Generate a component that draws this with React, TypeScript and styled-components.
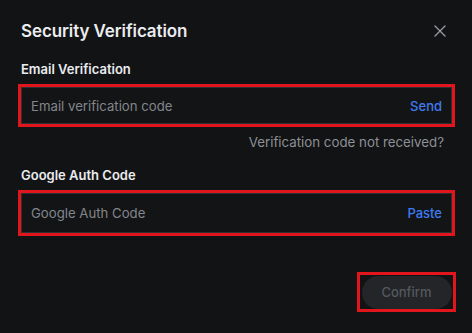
import React from "react";
import styled, { createGlobalStyle } from "styled-components";

const GlobalStyle = createGlobalStyle`
  html, body {
    margin: 0;
    padding: 0;
    background: #121314;
  }
  body {
    font-family: Inter, "Noto Sans", sans-serif;
  }
`;

const Dialog = styled.div`
  width: 472px;
  height: 333px;
  box-sizing: border-box;
  background: #121314;
  padding: 18px 17px 0 18px;
  display: flex;
  flex-direction: column;
`;

const Header = styled.div`
  display: flex;
  align-items: center;
  justify-content: space-between;
  height: 26px;
  padding-left: 3px;
`;

const Title = styled.h2`
  margin: 0;
  color: #eaecef;
  font-size: 17px;
  font-weight: 600;
  letter-spacing: -0.1px;
`;

const CloseButton = styled.button`
  background: none;
  border: none;
  padding: 0;
  margin-right: 7px;
  width: 16px;
  height: 16px;
  display: flex;
  align-items: center;
  justify-content: center;
  cursor: pointer;
`;

const Label = styled.div<{ $top: number }>`
  margin-top: ${(p) => p.$top}px;
  padding-left: 3px;
  color: #eaecef;
  font-size: 13px;
  font-weight: 600;
  line-height: 16px;
`;

const Highlight = styled.div<{ $height: number }>`
  margin-top: 7px;
  border: 3px solid #e0161c;
  height: ${(p) => p.$height}px;
  display: flex;
`;

const InputBox = styled.div`
  flex: 1;
  display: flex;
  align-items: center;
  justify-content: space-between;
  border: 1px solid #2e3034;
  background: #131415;
  padding: 0 9px 0 9px;
`;

const Placeholder = styled.span`
  color: #82868c;
  font-size: 13.2px;
`;

const Action = styled.button`
  background: none;
  border: none;
  padding: 0;
  color: #3e7bf2;
  font-family: inherit;
  font-size: 13px;
  font-weight: 500;
  cursor: pointer;
`;

const HelpLink = styled.div`
  margin-top: 7px;
  text-align: right;
  padding-right: 11px;
  color: #8d9096;
  font-size: 13.3px;
  line-height: 16px;
`;

const Footer = styled.div`
  margin-top: auto;
  margin-bottom: 21px;
  display: flex;
  justify-content: flex-end;
  margin-right: -1px;
`;

const ConfirmFrame = styled.div`
  border: 3px solid #e0161c;
  width: 93px;
  height: 34px;
  display: flex;
  align-items: center;
  justify-content: center;
`;

const ConfirmButton = styled.button`
  width: 90px;
  height: 33px;
  border: none;
  border-radius: 17px;
  background: #242529;
  color: #55585e;
  font-family: inherit;
  font-size: 13px;
  font-weight: 500;
`;

export default function App() {
  return (
    <>
      <GlobalStyle />
      <Dialog>
        <Header>
          <Title>Security Verification</Title>
          <CloseButton aria-label="close">
            <svg width="12" height="12" viewBox="0 0 12 12">
              <path d="M1 1L11 11M11 1L1 11" stroke="#9a9da3" strokeWidth="1.3" strokeLinecap="round" />
            </svg>
          </CloseButton>
        </Header>
        <Label $top={17}>Email Verification</Label>
        <Highlight $height={37}>
          <InputBox>
            <Placeholder>Email verification code</Placeholder>
            <Action>Send</Action>
          </InputBox>
        </Highlight>
        <HelpLink>Verification code not received?</HelpLink>
        <Label $top={17}>Google Auth Code</Label>
        <Highlight $height={40}>
          <InputBox>
            <Placeholder>Google Auth Code</Placeholder>
            <Action>Paste</Action>
          </InputBox>
        </Highlight>
        <Footer>
          <ConfirmFrame>
            <ConfirmButton>Confirm</ConfirmButton>
          </ConfirmFrame>
        </Footer>
      </Dialog>
    </>
  );
}
